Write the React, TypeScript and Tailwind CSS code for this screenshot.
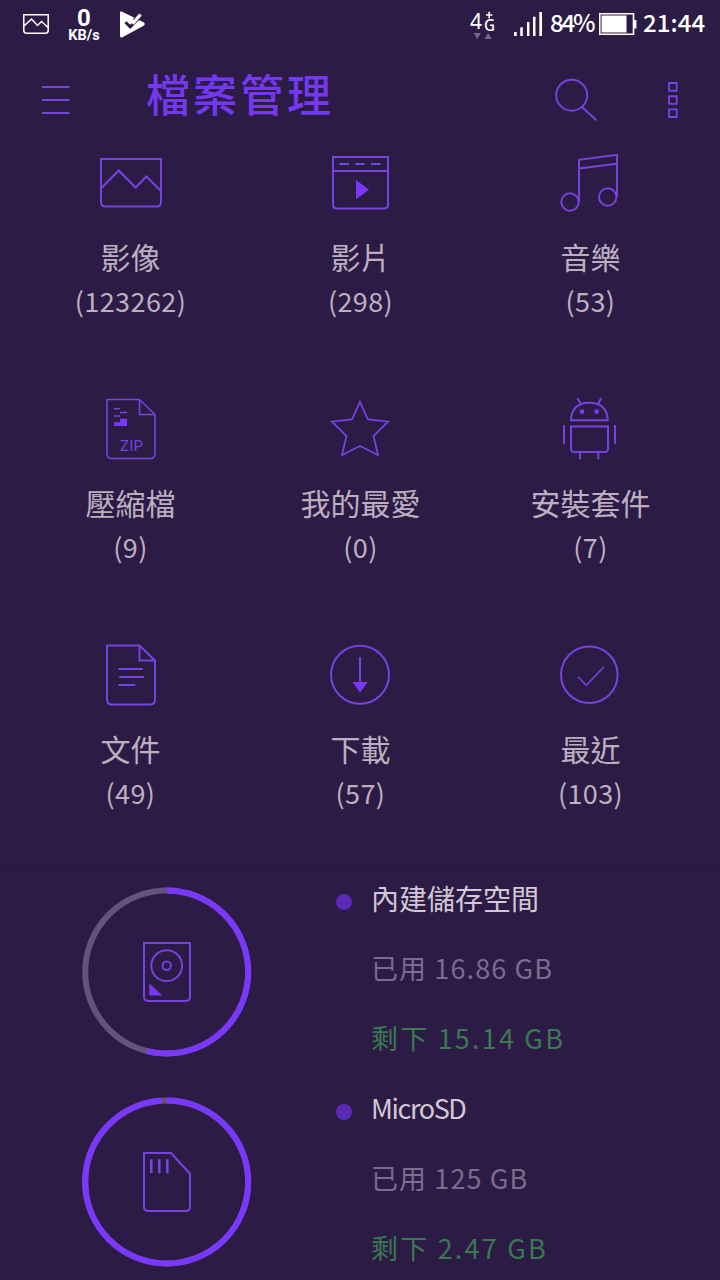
import type { ReactNode } from 'react';

const ACCENT = '#7642e0';
const SOLID = '#7a38ff';

function CategoryIcon({ children }: { children: ReactNode }) {
  return (
    <svg width="64" height="64" viewBox="0 0 64 64" fill="none" stroke={ACCENT} strokeWidth="2">
      {children}
    </svg>
  );
}

const PAGE_OUTLINE = 'M9 2.5H41.5L57 17.5V56.5Q57 61.5 52 61.5H14Q9 61.5 9 56.5ZM41.5 2.5V17.5H57';

const categories = [
  {
    label: '影像',
    count: '(123262)',
    icon: (
      <>
        <path d="M3 8H63V51Q63 55.5 58.5 55.5H7.5Q3 55.5 3 51Z" />
        <path d="M3 37.5L20.7 19.5L37.7 36.5L48.3 25.5L63 40" />
      </>
    ),
  },
  {
    label: '影片',
    count: '(298)',
    icon: (
      <>
        <path d="M5 6H60V53.5Q60 57.5 56 57.5H9Q5 57.5 5 53.5ZM5 20H60" />
        <path d="M11.3 13H21M27.3 13H36.7M43 13H52.7" />
        <path d="M28 29L41 38.7L28 48.3Z" fill={SOLID} stroke="none" />
      </>
    ),
  },
  {
    label: '音樂',
    count: '(53)',
    icon: (
      <>
        <circle cx="12" cy="51" r="8.7" />
        <circle cx="49.7" cy="46" r="8.7" />
        <path d="M21 51V8.8L59 3.8V46M21 17.5L59 12.7" />
      </>
    ),
  },
  {
    label: '壓縮檔',
    count: '(9)',
    icon: (
      <>
        <path d={PAGE_OUTLINE} strokeWidth="1.6" />
        <path d="M16 11.7H22M22 15.5H29M16 19H22" strokeWidth="1.4" />
        <path d="M16 25.3H22V21.7H29V29H16Z" fill={SOLID} stroke="none" />
        <text
          x="22"
          y="53.8"
          fontSize="15"
          fontFamily="Roboto, sans-serif"
          fontWeight="400"
          fill={ACCENT}
          stroke="none"
          textLength="23"
        >
          ZIP
        </text>
      </>
    ),
  },
  {
    label: '我的最愛',
    count: '(0)',
    icon: (
      <path
        d="M32 5L40 22.5L60 24.7L45.5 39L50 58L32 49L14 58L18.5 39L4 24.7L24 22.5Z"
        strokeWidth="1.8"
      />
    ),
  },
  {
    label: '安裝套件',
    count: '(7)',
    icon: (
      <>
        <path d="M13 23.3C13 12 20 5.7 31.4 5.7S49.7 12 49.7 23.3Z" />
        <path d="M19.3 1L22.7 6.8M43.3 1L40 6.8" />
        <circle cx="24" cy="14.7" r="2.4" fill={SOLID} stroke="none" />
        <circle cx="38.7" cy="14.7" r="2.4" fill={SOLID} stroke="none" />
        <path d="M13 29.5H50V51.5Q50 55 46.5 55H16.5Q13 55 13 51.5Z" />
        <path d="M6 28V47M57 28V47M22 55V62.3M40.3 55V62.3" />
      </>
    ),
  },
  {
    label: '文件',
    count: '(49)',
    icon: (
      <>
        <path d={PAGE_OUTLINE} />
        <path d="M20.5 26H44.8M21.2 34H45.8M20.5 42H37.4" />
      </>
    ),
  },
  {
    label: '下載',
    count: '(57)',
    icon: (
      <>
        <circle cx="32" cy="31.7" r="29" />
        <path d="M32 14V40" />
        <path d="M24.5 39H39.7L32 49.5Z" fill={SOLID} stroke="none" />
      </>
    ),
  },
  {
    label: '最近',
    count: '(103)',
    icon: (
      <>
        <circle cx="31.3" cy="31.7" r="28.3" />
        <path d="M20 33.7L28.3 42.3L46 23.7" strokeWidth="1.6" />
      </>
    ),
  },
];

const storages = [
  {
    name: '內建儲存空間',
    nameClass: 'text-[28px] tracking-normal',
    used: '16.86 GB',
    free: '15.14 GB',
    ratio: 0.539,
    icon: (
      <>
        <path d="M62 56H108V109.5Q108 114 103.5 114H66.5Q62 114 62 109.5Z" />
        <circle cx="84.7" cy="78.7" r="15.4" />
        <circle cx="84.7" cy="78.7" r="4.2" />
        <path d="M67.3 96.3V108.5H80.3Z" fill={SOLID} stroke="none" />
      </>
    ),
  },
  {
    name: 'MicroSD',
    nameClass: 'text-[27px] tracking-[-1.4px]',
    used: '125 GB',
    free: '2.47 GB',
    ratio: 0.99,
    icon: (
      <>
        <path d="M62 56H89L108 76.7V109.5Q108 114 103.5 114H66.5Q62 114 62 109.5Z" />
        <path d="M69.3 62.3V76.3M77.3 62.3V76.3M85.3 62.3V76.3" strokeWidth="2.6" />
      </>
    ),
  },
];

function UsageRing({ ratio, children }: { ratio: number; children: ReactNode }) {
  return (
    <svg width="170" height="170" viewBox="0 0 170 170" fill="none" stroke={ACCENT} strokeWidth="2">
      <circle cx="84.7" cy="85" r="81.5" stroke="#65537b" strokeWidth="6" />
      <circle
        cx="84.7"
        cy="85"
        r="81.5"
        stroke={SOLID}
        strokeWidth="6"
        pathLength={100}
        strokeDasharray={`${ratio * 100} 100`}
        transform="rotate(-90 84.7 85)"
      />
      {children}
    </svg>
  );
}

function StatusBar() {
  return (
    <div className="flex h-12 items-center pl-[23px] pr-[15px] text-white">
      <svg width="26" height="20" viewBox="0 0 26 20" fill="none" stroke="currentColor" strokeWidth="1.5">
        <path d="M.8.8H25.2V16.5Q25.2 19.2 22.5 19.2H3.5Q.8 19.2.8 16.5ZM1 12L8.5 5L14.5 11.5L18.5 7.5L25 13.5" />
      </svg>
      <div className="ml-[17px] flex w-9 flex-col items-center pt-[3px] font-['Roboto'] font-bold">
        <span className="text-[24px] leading-[20px]">0</span>
        <span className="text-[14.5px] leading-[16px]">KB/s</span>
      </div>
      <svg className="ml-[18px]" width="25" height="27" viewBox="0 0 25 27" fill="none">
        <path d="M0 2Q0-.4 2.2.7L23.6 11.2Q26 13 23.6 14.7L2.5 26.2Q0 27.2 0 24.8Z" fill="currentColor" />
        <path d="M12.5 9.5L18.5-.5L25 4.5L20.8 9Z" fill="#2c1b45" />
        <path d="M5.5 11.2L10.2 15.8L18 8" stroke="#2c1b45" strokeWidth="3" />
        <path d="M11 9.5L13.5 11.5L20.5 3.5" stroke="currentColor" strokeWidth="3.4" />
      </svg>
      <svg
        className="ml-auto overflow-visible"
        width="26"
        height="30"
        viewBox="0 0 26 30"
        fill="currentColor"
        fontFamily="'Noto Sans', sans-serif"
        fontWeight="400"
      >
        <text x="0" y="20" fontSize="21">4</text>
        <text x="14" y="22" fontSize="16" fontWeight="500" textLength="11" lengthAdjust="spacingAndGlyphs">G</text>
        <path d="M19.2 2.8V9.2M16 6H22.4" stroke="currentColor" strokeWidth="1.6" />
        <path d="M3.6 24H11L7.3 30ZM14.4 30H21.8L18.1 24Z" fill="#77678c" />
      </svg>
      <svg className="ml-[18px]" width="28" height="24" viewBox="0 0 28 24" fill="currentColor">
        <path d="M0 20H2.7V24H0ZM6.3 15.3H8.8V24H6.3ZM13 10H15.4V24H13ZM19 4.7H21.5V24H19ZM25.3 0H28V24H25.3Z" />
      </svg>
      <span className="ml-2 w-[44px] whitespace-nowrap pb-[5px] text-[24px] leading-none font-medium tracking-[-2.2px]">84%</span>
      <svg className="ml-[5px]" width="38" height="22" viewBox="0 0 38 22" fill="none">
        <path d="M.8.8H34.5V21.2H.8Z" stroke="currentColor" strokeWidth="1.6" />
        <path d="M2.6 2.6H27.5V19.5H2.6ZM35 7H37.4V15.5H35Z" fill="currentColor" />
      </svg>
      <span className="ml-[6px] w-[62px] whitespace-nowrap pb-[5px] text-[24px] leading-none font-medium tracking-[0.1px]">21:44</span>
    </div>
  );
}

function Header() {
  return (
    <div className="flex h-[103px] items-center pl-[42px] pr-[42px]">
      <svg width="28" height="30" viewBox="0 0 28 30" stroke={ACCENT} strokeWidth="1.8">
        <path d="M0 2H27.5M0 15H27.5M0 28H27.5" />
      </svg>
      <h1 className="ml-[76px] pb-[14px] text-[44px] leading-none font-medium tracking-[3px] text-[#7338f0]">檔案管理</h1>
      <svg className="ml-auto" width="44" height="44" viewBox="0 0 44 44" fill="none" stroke={ACCENT} strokeWidth="1.9">
        <circle cx="17.7" cy="17.2" r="15.5" />
        <path d="M28 29L42.3 42.3" />
      </svg>
      <svg className="ml-[69px]" width="11" height="36" viewBox="0 0 11 36" fill="none" stroke={ACCENT} strokeWidth="1.9">
        <path d="M2 1H9.7V8.7H2ZM2 14.2H9.7V21.9H2ZM2 27.4H9.7V35H2Z" />
      </svg>
    </div>
  );
}

export default function App() {
  return (
    <div className="h-[1280px] w-[720px] overflow-hidden bg-[#2c1b45] font-['Noto_Sans_CJK_TC',sans-serif] font-normal">
      <StatusBar />
      <Header />
      <div className="grid h-[715px] auto-rows-[246px] grid-cols-3 overflow-hidden border-b border-[#271640] px-[15px]">
        {categories.map(item => (
          <div key={item.label} className="flex flex-col items-center text-[#bcb0c0]">
            <CategoryIcon>{item.icon}</CategoryIcon>
            <div className="mt-[19px] pl-px text-[30px] leading-[44px]">{item.label}</div>
            <div className="mt-px pl-px text-[27px] leading-[44px] tracking-[0.4px]">{item.count}</div>
          </div>
        ))}
      </div>
      {storages.map(item => (
        <div key={item.name} className="flex h-[210px] pl-[82px]">
          <div className="flex items-center pt-[2px]">
            <UsageRing ratio={item.ratio}>{item.icon}</UsageRing>
          </div>
          <div className="ml-[84px] pt-[28px]">
            <div className="size-4 rounded-full bg-[#5b2ab9]" />
          </div>
          <div className="ml-[19px] text-[27px] leading-[70px] whitespace-nowrap">
            <div className={`-mt-[3px] text-[#d3c8d5] ${item.nameClass}`}>{item.name}</div>
            <div className="tracking-[1.1px] text-[#7d6b8c]">已用 {item.used}</div>
            <div className="tracking-[2.2px] text-[#3a7851]">剩下 {item.free}</div>
          </div>
        </div>
      ))}
    </div>
  );
}
